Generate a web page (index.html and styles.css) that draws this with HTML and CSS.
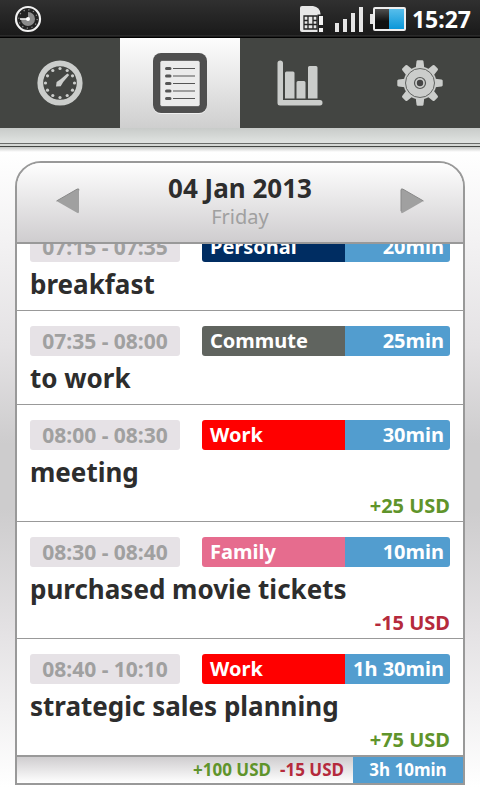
FILE: index.html
```html
<!DOCTYPE html>
<html lang="en">
<head>
<meta charset="utf-8">
<meta name="viewport" content="width=device-width, initial-scale=1">
<title>Time log</title>
<link rel="stylesheet" href="styles.css">
</head>
<body>
<header class="status">
  <svg class="status-app" width="28" height="28" viewBox="0 0 28 28" aria-hidden="true">
    <circle cx="14" cy="14" r="12" fill="#222" stroke="#f2f2f2" stroke-width="2.2"/>
    <circle cx="14" cy="14" r="9.2" fill="none" stroke="#999" stroke-width="1.2" stroke-dasharray="1.2 3.617"/>
    <path d="M14 7a7 7 0 1 1-7 7h7z" fill="#8c8c8c"/>
    <path d="M6 14h8" stroke="#eee" stroke-width="1.6"/>
    <circle cx="14" cy="14" r="2" fill="#fff"/>
  </svg>
  <div class="status-right">
    <svg width="24" height="28" viewBox="0 0 24 28" aria-hidden="true">
      <path d="M2 1h11q7 1 7.500 8v18H2q-2 0-2-2V3q0-2 2-2z" fill="#e6e6e6"/>
      <path d="M4 11h13v13H4zM4 15.500h4M4 19.500h4M8 11v13M13 11v13M13 15.500h4M13 19.500h4M8 19.500h5" fill="none" stroke="#222" stroke-width="1.300"/>
      <path d="M17.500 9.500H24V28h-6.500z" fill="#222"/>
      <path d="M19 11h4v9h-4zM19 23h4v4h-4z" fill="#f2f2f2"/>
    </svg>
    <svg width="30" height="28" viewBox="0 0 30 28" aria-hidden="true">
      <path d="M1 18h4v9H1zM9 14h4v13H9zM17 8h4v19h-4zM25 2h4v25h-4z" fill="#e6e6e6"/>
    </svg>
    <svg width="36" height="26" viewBox="0 0 36 26" aria-hidden="true">
      <defs>
        <linearGradient id="cell" x2="0" y2="1"><stop offset="0" stop-color="#555"/><stop offset=".6" stop-color="#111"/></linearGradient>
        <linearGradient id="charge" x2="0" y2="1"><stop offset="0" stop-color="#5bc0ec"/><stop offset="1" stop-color="#0795d8"/></linearGradient>
      </defs>
      <path d="M0 8h4v10H0z" fill="#e6e6e6"/>
      <rect x="4" y="2" width="31" height="22" rx="1" fill="url(#cell)"/>
      <path d="M19 2h16v22H19z" fill="url(#charge)"/>
      <rect x="4" y="2" width="31" height="22" rx="1" fill="none" stroke="#eee" stroke-width="2"/>
    </svg>
    <span class="clock">15:27</span>
  </div>
</header>
<nav class="tabs">
  <button class="tab" type="button" aria-label="Timer">
    <svg width="48" height="48" viewBox="0 0 48 48" fill="#cbcdcb">
      <circle cx="24" cy="24" r="19.7" fill="none" stroke="#cbcdcb" stroke-width="5.8"/>
      <circle cx="24" cy="9.5" r="1.6"/><circle cx="31.2" cy="11.5" r="1.6"/><circle cx="36.5" cy="16.8" r="1.6"/><circle cx="38.5" cy="24" r="1.6"/><circle cx="36.5" cy="31.2" r="1.6"/><circle cx="31.2" cy="36.5" r="1.6"/><circle cx="24" cy="38.5" r="1.6"/><circle cx="16.8" cy="36.5" r="1.6"/><circle cx="11.5" cy="31.2" r="1.6"/><circle cx="9.5" cy="24" r="1.6"/><circle cx="11.5" cy="16.8" r="1.6"/><circle cx="16.8" cy="11.5" r="1.6"/>
      <path d="M20 27.500l.6-4.500 4-2.700 6.800-5.800 1.800 1.600-6 7-2.500 4.200z"/>
    </svg>
  </button>
  <button class="tab tab-active" type="button" aria-label="Log" aria-current="page">
    <svg width="56" height="62" viewBox="0 0 56 62">
      <rect x="1" y="2" width="54" height="60" rx="8" fill="#fff" opacity=".6"/>
      <rect x="1" y="1" width="54" height="60" rx="8" fill="#4f4f4f"/>
      <rect x="8" y="8.500" width="40" height="46" rx="2" fill="#ebebeb" stroke="#444" stroke-width=".6"/>
      <path d="M21 16.500h22M21 24h22M21 31.500h22M21 39h22M21 46.500h22" stroke="#555" stroke-width="1.200"/>
      <path d="M14.500 16.500h3.500M14.500 24h3.500M14.500 31.500h3.500M14.500 39h3.500M14.500 46.500h3.500" stroke="#555" stroke-width="3" stroke-linecap="round"/>
    </svg>
  </button>
  <button class="tab" type="button" aria-label="Reports">
    <svg width="48" height="48" viewBox="0 0 48 48" fill="#cbcdcb">
      <path d="M1.500 4q0-2.500 2.700-2.500T7 4v37h37q2.500 0 2.500 2.700T44 46.500H4q-2.500 0-2.500-2.500z"/>
      <path d="M9 39.500V14q0-1.500 1.500-1.500H17q1.500 0 1.500 1.500v25.500zM20.500 39.500v-16q0-1.500 1.500-1.500h6q1.500 0 1.500 1.500v16zM32 39.500v-31Q32 7 33.500 7H40q1.500 0 1.500 1.500v31z"/>
    </svg>
  </button>
  <button class="tab" type="button" aria-label="Settings">
    <svg width="48" height="48" viewBox="0 0 48 48">
      <defs><path id="tooth" d="M19.500 11l1-8.500q.2-1.200 1.200-1.200h4.600q1 0 1.200 1.200l1 8.500z"/></defs>
      <g fill="#cbcdcb">
        <use href="#tooth"/><use href="#tooth" transform="rotate(45 24 24)"/><use href="#tooth" transform="rotate(90 24 24)"/><use href="#tooth" transform="rotate(135 24 24)"/><use href="#tooth" transform="rotate(180 24 24)"/><use href="#tooth" transform="rotate(225 24 24)"/><use href="#tooth" transform="rotate(270 24 24)"/><use href="#tooth" transform="rotate(315 24 24)"/>
        <circle cx="24" cy="24" r="16.500"/>
      </g>
      <g fill="none" stroke="#555755"><circle cx="24" cy="24" r="14.500" stroke-width=".9"/><circle cx="24" cy="24" r="5.500" stroke-width="1.200"/></g>
      <circle cx="24" cy="24" r="3.200" fill="#444"/>
    </svg>
  </button>
</nav>
<div class="ledge"></div>
<main class="page">
  <section class="card">
    <div class="day">
      <button class="step" type="button" aria-label="Previous day">
        <svg width="26" height="28" viewBox="0 0 26 28"><path d="M1.500 14 22 2.200q2-1 2 1v21.600q0 2-2 1z" fill="#a0a0a0"/><path d="M1.500 14 22 2.200q2-1 2 1" fill="none" stroke="#888"/></svg>
      </button>
      <div class="day-text">
        <h1 class="date">04 Jan 2013</h1>
        <p class="weekday">Friday</p>
      </div>
      <button class="step" type="button" aria-label="Next day">
        <svg width="26" height="28" viewBox="0 0 26 28"><path d="M24.500 14 4 2.200q-2-1-2 1v21.600q0 2 2 1z" fill="#a0a0a0"/><path d="M24.500 14 4 2.200q-2-1-2 1v21" fill="none" stroke="#888"/></svg>
      </button>
    </div>
    <ul class="entries">
      <li class="entry">
        <div class="meta"><span class="time">07:15 - 07:35</span><span class="bar"><span class="kind personal">Personal</span><span class="length">20min</span></span></div>
        <h2 class="title">breakfast</h2>
      </li>
      <li class="entry">
        <div class="meta"><span class="time">07:35 - 08:00</span><span class="bar"><span class="kind commute">Commute</span><span class="length">25min</span></span></div>
        <h2 class="title">to work</h2>
      </li>
      <li class="entry">
        <div class="meta"><span class="time">08:00 - 08:30</span><span class="bar"><span class="kind work">Work</span><span class="length">30min</span></span></div>
        <h2 class="title">meeting</h2>
        <p class="amount gain">+25 USD</p>
      </li>
      <li class="entry">
        <div class="meta"><span class="time">08:30 - 08:40</span><span class="bar"><span class="kind family">Family</span><span class="length">10min</span></span></div>
        <h2 class="title">purchased movie tickets</h2>
        <p class="amount loss">-15 USD</p>
      </li>
      <li class="entry">
        <div class="meta"><span class="time">08:40 - 10:10</span><span class="bar"><span class="kind work">Work</span><span class="length">1h 30min</span></span></div>
        <h2 class="title">strategic sales planning</h2>
        <p class="amount gain">+75 USD</p>
      </li>
    </ul>
    <footer class="totals">
      <span class="gain">+100 USD</span>
      <span class="loss">-15 USD</span>
      <span class="total-time">3h 10min</span>
    </footer>
  </section>
</main>
</body>
</html>
```

FILE: styles.css
```css
* { box-sizing: border-box; }

body {
  margin: 0;
  height: 100vh;
  display: flex;
  flex-direction: column;
  overflow: hidden;
  font-family: "Noto Sans", "Open Sans", sans-serif;
  font-weight: 700;
  color: #2d2d2d;
  background: #fff;
}

h1, h2, p, ul { margin: 0; padding: 0; font-size: inherit; }
svg { display: block; }

.status {
  flex: none;
  height: 38px;
  display: flex;
  align-items: center;
  justify-content: space-between;
  padding: 0 9px 0 14px;
  background: linear-gradient(#303030, #1a1a1a 35px, #3a3a3a 36px, #000 37px);
}
.status-right { display: flex; align-items: center; gap: 6px; }
.status-right svg:first-child { margin-right: 4px; }
.clock { font-size: 23px; line-height: 36px; color: #fff; }

.tabs { flex: none; display: flex; height: 90px; background: #434542; }
.tab {
  flex: 1;
  display: flex;
  align-items: center;
  justify-content: center;
  padding: 0;
  border: 0;
  background: none;
}
.tab-active { background: linear-gradient(#fdfdfd, #cfcfcf); }

.ledge {
  flex: none;
  height: 24px;
  background: linear-gradient(#c8cbc9, #dfe2e0 14px, #dfe2e0 15px, #6a6c6a 15px, #6a6c6a 16px, #d5d8d5 16px, #d5d8d5 18px, #444744 18px, #444744 19px, #c4c6c4 19px, #fff);
}

.page {
  flex: 1;
  min-height: 0;
  display: flex;
  padding: 9px 15px 15px;
  background: linear-gradient(#fff, #e4e2e4 30%, #cdcccd 45%, #cdcccd 55%, #e4e2e4 74%, #fff 98%);
}

.card {
  flex: 1;
  display: flex;
  flex-direction: column;
  overflow: hidden;
  border: 2px solid #999;
  border-radius: 26px 26px 0 0;
  background: #fff;
}

.day {
  flex: none;
  height: 81px;
  display: flex;
  align-items: center;
  justify-content: space-between;
  padding: 0 38px 4px;
  border-bottom: 2px solid #999;
  background: linear-gradient(#fefefe, #cfcdcf);
}
.step { padding: 0; border: 0; background: none; }
.day-text { text-align: center; }
.date { font-size: 26px; line-height: 32px; }
.weekday { font-size: 20px; line-height: 26px; font-weight: 400; color: #a0a0a0; }

.entries {
  flex: 1;
  min-height: 0;
  display: flex;
  flex-direction: column;
  justify-content: flex-end;
  overflow: hidden;
  list-style: none;
}
.entry { flex: none; padding: 15px 13px 8px; border-bottom: 1px solid #999; }
.entry:has(.amount) { padding-bottom: 2px; }
.entry:last-child { border-bottom: 0; }

.meta { display: flex; gap: 22px; font-size: 20px; line-height: 30px; }
.time { width: 150px; border-radius: 3px; font-size: 21px; text-align: center; color: #a0a0a0; background: #e6e2e6; }
.bar { flex: 1; display: flex; border-radius: 3px; overflow: hidden; color: #fff; }
.kind { flex: 1; padding-left: 8px; }
.length { width: 105px; padding-right: 6px; text-align: right; background: #529dcf; }
.personal { background: #002d62; }
.commute { background: #60645f; }
.work { background: #f00; }
.family { background: #e66c8e; }

.title { padding-top: 4px; font-size: 26px; line-height: 36px; }
.amount { padding-top: 3px; font-size: 20px; line-height: 26px; text-align: right; }
.gain { color: #5f942b; }
.loss { color: #b52a3c; }

.totals {
  flex: none;
  height: 28px;
  display: flex;
  justify-content: flex-end;
  gap: 9px;
  border-top: 2px solid #999;
  font-size: 17px;
  line-height: 26px;
  background: linear-gradient(#cfcdcf, #fff);
}
.total-time { width: 110px; text-align: center; color: #fff; background: #529dcf; }
```
